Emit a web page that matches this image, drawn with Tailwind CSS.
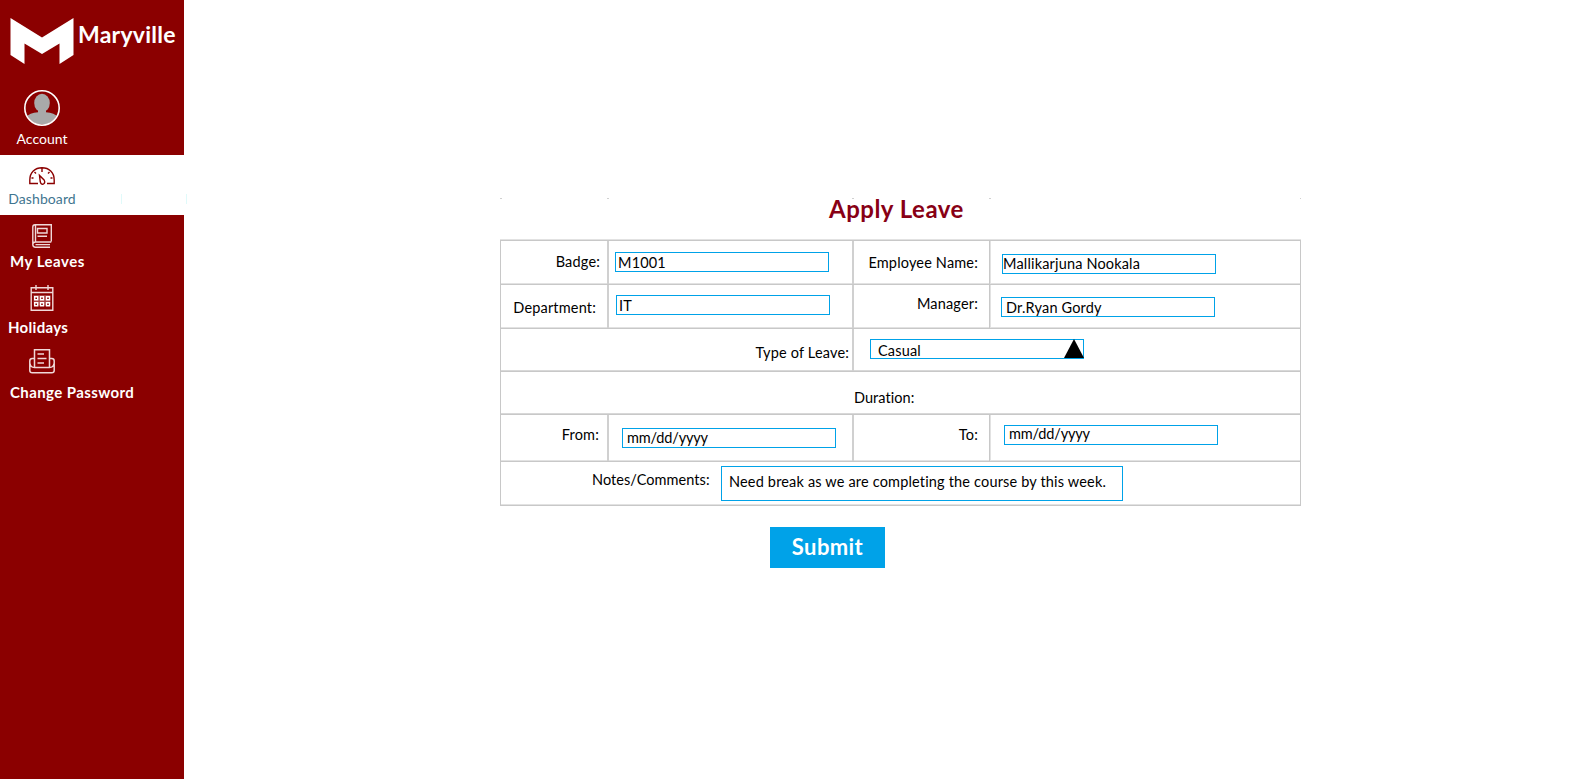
<!DOCTYPE html>
<html lang="en">
<head>
<meta charset="utf-8">
<title>Maryville - Apply Leave</title>
<script src="https://cdn.jsdelivr.net/npm/@tailwindcss/browser@4"></script>
</head>
<body class="flex h-screen w-screen overflow-hidden bg-white font-[Lato,sans-serif] text-[14px] leading-5 text-black">
<aside class="flex h-full w-[184px] shrink-0 flex-col bg-[#8b0000] text-white">
  <div class="flex h-[155px] flex-col">
    <div class="flex h-[90px] pt-[17px] pl-[10px]">
      <svg class="h-[48px] w-[64px] shrink-0" viewBox="0 0 64 48" fill="#fff"><path d="M0.500 1L32 20.500L63.500 1V38L49.500 47V26.500L32 37L14.500 26.500V47L0.500 38Z"/></svg>
      <span class="pt-[2px] pl-[4px] text-[23px] leading-[31px] font-bold tracking-[0.25px]">Maryville</span>
    </div>
    <div class="flex w-[84px] flex-col items-center">
      <svg class="h-9 w-9" viewBox="0 0 36 36"><defs><clipPath id="av"><circle cx="18" cy="18" r="16.500"/></clipPath></defs><g clip-path="url(#av)" fill="#a9a9a9"><ellipse cx="18" cy="13" rx="7.800" ry="9.300"/><path d="M14 19h8v3.300q8.500.7 12 5V37H2v-9.700q3.500-4.300 12-5z"/></g><circle cx="18" cy="18" r="17.200" fill="none" stroke="#fff" stroke-width="1.600"/></svg>
      <span class="mt-[3px]">Account</span>
    </div>
  </div>
  <div class="flex h-[60px] bg-white text-[#3f7590]">
    <div class="flex w-[84px] shrink-0 flex-col items-center pt-3">
      <svg class="h-[18px] w-[26px]" viewBox="0 0 26 18" fill="none" stroke="#8b0000" stroke-width="1.400"><path d="M9 16.500H.8V13C.8 5.500 6 .8 13 .8S25.200 5.500 25.200 13v3.500H18M13 1v4M5.500 5l1.500 1.500M20.500 5l-1.500 1.500M2.500 11h2M21.500 11h2M10.500 8.500l.8 6.500q1.200 3.500 3.800 1.500 1.200-1.500 0-3.500z"/></svg>
      <span class="mt-1 tracking-[0.1px]">Dashboard</span>
    </div>
    <div class="mt-[39px] ml-[37px] h-[10px] w-px shrink-0 bg-[#e0fafa]"></div>
    <div class="mt-[39px] ml-[64px] h-[10px] w-px shrink-0 bg-[#e0fafa]"></div>
  </div>
  <div class="flex flex-col pt-[9px] text-[15px] font-bold tracking-[0.4px]">
    <svg class="ml-[32px] h-6 w-5" viewBox="0 0 20 24" fill="none" stroke="#f0d8d8" stroke-width="1.400"><path d="M19.300 17.500V.8H3Q.8.800.8 3v17.500q0 2.700 2.700 2.700H18M19.300 18H3.500Q.8 18 .8 20.300M3.500 20.600H18M3.500 1v16.500M5.500 4.500h9.500v4.500H5.500zM5.500 12.200h9.500"/></svg>
    <span class="pt-[3px] pl-[10px] tracking-[0.5px]">My Leaves</span>
    <svg class="mt-[14px] ml-[30px] h-[27px] w-6" viewBox="0 0 24 27" fill="none" stroke="#f0d8d8" stroke-width="1.400"><path fill="#a84040" stroke="none" d="M3.500 10h17v10.500h-17z"/><path d="M1.200 2.800h21.600v22.500H1.200zM1 7.500h22M6 0v5M18 0v5"/><path stroke="#fff" fill="#8b0000" d="M4.700 11.700h3v3h-3zM10.500 11.700h3v3h-3zM16.500 11.700h3v3h-3zM4.700 17.700h3v3h-3zM10.500 17.700h3v3h-3zM16.500 17.700h3v3h-3z"/></svg>
    <span class="pt-[5px] pl-[8px] tracking-[0.3px]">Holidays</span>
    <svg class="mt-[12px] ml-[29px] h-[25px] w-[26px]" viewBox="0 0 26 25" fill="none" stroke="#f0d8d8" stroke-width="1.500"><path d="M5.500 18.500V.8h15v17.700M8.500 5h6.500M8.500 9.500h9M8.500 14h6.500M5.500 9.500H3.300Q.8 9.500.8 12v9.500q0 2.300 2.500 2.300h19.400q2.500 0 2.500-2.300V12q0-2.500-2.500-2.500h-2.200M1 14.500q.5 4 4.500 4h15q4 0 4.500-4"/></svg>
    <span class="pt-[8px] pl-[10px]">Change Password</span>
  </div>
</aside>
<main class="flex flex-1 flex-col pt-[196px] pl-[316px] text-[14.5px] tracking-[0.17px] [font-variant-ligatures:none]">
  <div class="flex h-[44px] w-[801px] flex-col">
    <div class="mt-[2px] flex h-px">
      <i class="h-px w-[2px] bg-[#d0d0d0]"></i>
      <i class="ml-[105px] h-px w-[2px] bg-[#d0d0d0]"></i>
      <i class="ml-[243px] h-px w-[2px] bg-[#d0d0d0]"></i>
      <i class="ml-[135px] h-px w-[2px] bg-[#d0d0d0]"></i>
      <i class="ml-[309px] h-px w-px bg-[#d0d0d0]"></i>
    </div>
    <h1 class="-mt-[3px] pl-[329px] text-[24px] leading-[26px] font-bold tracking-[0.5px] text-[#880015]">Apply Leave</h1>
  </div>
  <section class="flex w-[801px] flex-col border-x border-t border-[#c8c8c8] shadow-[0_-1px_0_#e2e2e2]">
    <div class="flex h-[44px] border-b border-[#c8c8c8] inset-shadow-[0_-1px_0_#e2e2e2]">
      <div class="w-[108px] border-r-2 border-[#d0d0d0] pt-[11px] pr-[7px] text-right">Badge:</div>
      <div class="w-[245px] border-r-2 border-[#d0d0d0] pt-[11px] pl-[6px]"><div class="h-5 w-[214px] border border-[#00a2e8] pl-[2px]">M1001</div></div>
      <div class="w-[136px] border-r border-[#c8c8c8] pt-[12px] pr-[11px] text-right shadow-[1px_0_0_#e2e2e2]">Employee Name:</div>
      <div class="pt-[13px] pl-[12px]"><div class="h-5 w-[214px] border border-[#00a2e8] leading-[18px]">Mallikarjuna Nookala</div></div>
    </div>
    <div class="flex h-[44px] border-b border-[#c8c8c8] inset-shadow-[0_-1px_0_#e2e2e2]">
      <div class="w-[108px] border-r-2 border-[#d0d0d0] pt-[13px] pr-[11px] text-right">Department:</div>
      <div class="w-[245px] border-r-2 border-[#d0d0d0] pt-[10px] pl-[7px]"><div class="h-5 w-[214px] border border-[#00a2e8] pl-[2px]">IT</div></div>
      <div class="w-[136px] border-r border-[#c8c8c8] pt-[9px] pr-[11px] text-right shadow-[1px_0_0_#e2e2e2]">Manager:</div>
      <div class="pt-[12px] pl-[11px]"><div class="h-5 w-[214px] border border-[#00a2e8] pl-[4px] leading-[20px]">Dr.Ryan Gordy</div></div>
    </div>
    <div class="flex h-[43px] border-b border-[#c8c8c8] inset-shadow-[0_-1px_0_#d8d8d8]">
      <div class="w-[353px] border-r-2 border-[#d0d0d0] pt-[14px] pr-[3px] text-right">Type of Leave:</div>
      <div class="pt-[10px] pl-[16px]">
        <div class="flex h-5 w-[214px] justify-between border border-[#00a2e8] pl-[7px] leading-[22px]">Casual
          <svg class="-mt-px -mr-px h-[19px] w-5" viewBox="0 0 20 19" fill="#000"><path d="M10 0L20 19H0z"/></svg>
        </div>
      </div>
    </div>
    <div class="h-[43px] border-b border-[#c8c8c8] pt-[16px] pl-[353px] tracking-[0.05px] inset-shadow-[0_-1px_0_#d8d8d8]">Duration:</div>
    <div class="flex h-[47px] border-b border-[#c8c8c8] inset-shadow-[0_-1px_0_#e2e2e2]">
      <div class="w-[108px] border-r-2 border-[#d0d0d0] pt-[10px] pr-[8px] text-right">From:</div>
      <div class="w-[245px] border-r-2 border-[#d0d0d0] pt-[13px] pl-[13px]"><div class="h-5 w-[214px] border border-[#00a2e8] pl-[4px] leading-[17px] tracking-[-0.15px]">mm/dd/yyyy</div></div>
      <div class="w-[136px] border-r border-[#c8c8c8] pt-[10px] pr-[11px] text-right shadow-[1px_0_0_#e2e2e2]">To:</div>
      <div class="pt-[10px] pl-[14px]"><div class="h-5 w-[214px] border border-[#00a2e8] pl-[4px] leading-[15px] tracking-[-0.15px]">mm/dd/yyyy</div></div>
    </div>
    <div class="flex h-[44px] border-b border-[#c8c8c8] pl-[91px] inset-shadow-[0_-1px_0_#e2e2e2]">
      <div class="w-[129px] pt-[8px] tracking-[0.05px]">Notes/Comments:</div>
      <div class="mt-[4px] h-[35px] w-[402px] border border-[#00a2e8] pl-[7px] leading-[30px]">Need break as we are completing the course by this week.</div>
    </div>
  </section>
  <button class="mt-[21px] ml-[270px] h-[41px] w-[115px] bg-[#00a2e8] pb-[2px] text-[22px] leading-[39px] font-bold tracking-[0.4px] text-white">Submit</button>
</main>
</body>
</html>
